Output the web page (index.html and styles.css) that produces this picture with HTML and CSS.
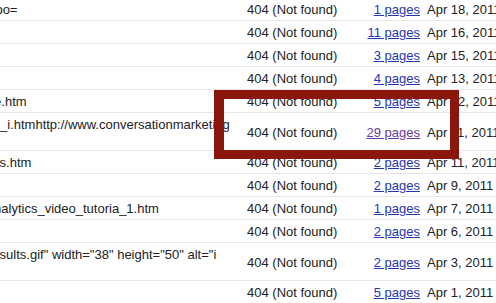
FILE: index.html
```html
<!DOCTYPE html>
<html>
<head>
<meta charset="utf-8">
<link rel="stylesheet" href="styles.css">
</head>
<body>
<div class="sheet">
  <div class="row"><div class="url i1">oo=</div><div class="status">404 (Not found)</div><div class="pages"><a href="#">1 pages</a></div><div class="date">Apr 18, 2011</div></div>
  <div class="row"><div class="url"></div><div class="status">404 (Not found)</div><div class="pages"><a href="#">11 pages</a></div><div class="date">Apr 16, 2011</div></div>
  <div class="row"><div class="url"></div><div class="status">404 (Not found)</div><div class="pages"><a href="#">3 pages</a></div><div class="date">Apr 15, 2011</div></div>
  <div class="row"><div class="url"></div><div class="status">404 (Not found)</div><div class="pages"><a href="#">4 pages</a></div><div class="date">Apr 13, 2011</div></div>
  <div class="row"><div class="url i5">e.htm</div><div class="status">404 (Not found)</div><div class="pages"><a href="#">5 pages</a></div><div class="date">Apr 12, 2011</div></div>
  <div class="row tall"><div class="url">_i.htmhttp://www.conversationmarketing</div><div class="status">404 (Not found)</div><div class="pages"><a href="#" class="visited">29 pages</a></div><div class="date">Apr 11, 2011</div></div>
  <div class="row"><div class="url i7">s.htm</div><div class="status">404 (Not found)</div><div class="pages"><a href="#">2 pages</a></div><div class="date">Apr 11, 2011</div></div>
  <div class="row"><div class="url"></div><div class="status">404 (Not found)</div><div class="pages"><a href="#">2 pages</a></div><div class="date">Apr 9, 2011</div></div>
  <div class="row"><div class="url i9">nalytics_video_tutoria_1.htm</div><div class="status">404 (Not found)</div><div class="pages"><a href="#">1 pages</a></div><div class="date">Apr 7, 2011</div></div>
  <div class="row"><div class="url"></div><div class="status">404 (Not found)</div><div class="pages"><a href="#">2 pages</a></div><div class="date">Apr 6, 2011</div></div>
  <div class="row tall"><div class="url i7">sults.gif" width="38" height="50" alt="i</div><div class="status">404 (Not found)</div><div class="pages"><a href="#">2 pages</a></div><div class="date">Apr 3, 2011</div></div>
  <div class="row"><div class="url"></div><div class="status">404 (Not found)</div><div class="pages"><a href="#">5 pages</a></div><div class="date">Apr 1, 2011</div></div>
</div>
<div class="highlight"></div>
</body>
</html>
```
FILE: styles.css
```css
html, body {
  margin: 0;
  padding: 0;
  background: #ffffff;
  overflow: hidden;
}
body {
  position: relative;
  width: 496px;
  height: 303px;
  font-family: "Liberation Sans", Arial, sans-serif;
  font-size: 13px;
  line-height: 15px;
  color: #222222;
}
.sheet {
  margin-top: -2px;
}
.row {
  display: grid;
  grid-template-columns: 240px 126px 57px 200px;
  align-items: center;
  box-sizing: border-box;
  padding: 4px 0 3px;
  border-bottom: 1px solid #e6e6e6;
  min-height: 23px;
}
.row.tall {
  min-height: 38px;
}
.url {
  align-self: start;
  white-space: nowrap;
  overflow: hidden;
  min-height: 15px;
}
.i1 { text-indent: -4.6px; }
.i5 { text-indent: -5.9px; }
.i7 { text-indent: -0.4px; }
.i9 { text-indent: -5.9px; }
.status {
  padding-left: 7px;
  white-space: nowrap;
}
.pages {
  text-align: right;
  padding-right: 3px;
  white-space: nowrap;
}
.pages a {
  color: #2436b4;
  text-decoration: underline;
}
.pages a.visited {
  color: #6a3b9e;
}
.date {
  padding-left: 4px;
  white-space: nowrap;
}
.highlight {
  position: absolute;
  left: 214px;
  top: 90px;
  width: 245px;
  height: 69px;
  box-sizing: border-box;
  border-style: solid;
  border-color: #8b160b;
  border-width: 9px 9px 9px 10px;
}
```
